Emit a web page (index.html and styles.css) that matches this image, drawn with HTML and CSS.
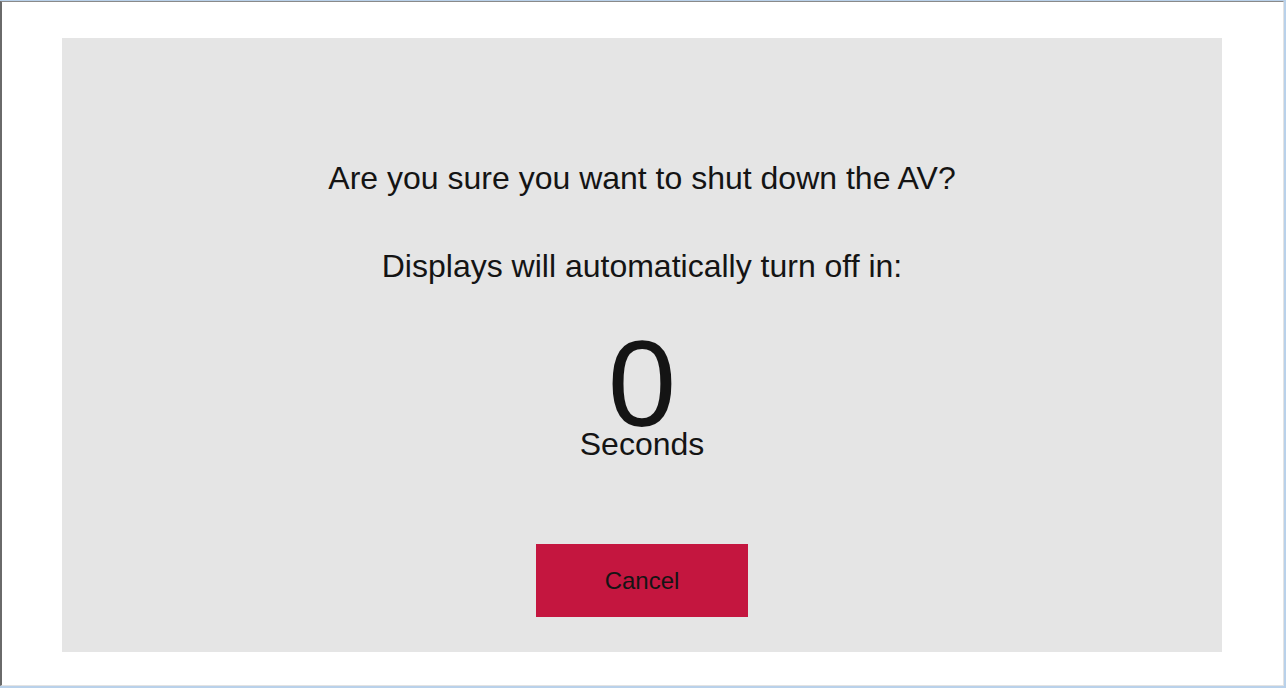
FILE: index.html
```html
<!DOCTYPE html>
<html>
<head>
<meta charset="utf-8">
<link rel="stylesheet" href="styles.css">
</head>
<body>
<div class="outer">
  <div class="window">
    <div class="panel">
      <p class="msg msg-first">Are you sure you want to shut down the AV?</p>
      <p class="msg msg-second">Displays will automatically turn off in:</p>
      <div class="count">0</div>
      <div class="unit">Seconds</div>
      <button class="cancel">Cancel</button>
    </div>
  </div>
</div>
</body>
</html>
```

FILE: styles.css
```css
html, body {
  margin: 0;
  padding: 0;
  background: #ffffff;
}
.outer {
  width: 1286px;
  height: 688px;
  box-sizing: border-box;
  border-top: 1px solid #b9d1ea;
  border-right: 2px solid #b9d1ea;
  border-bottom: 2px solid #b9d1ea;
  background: #ffffff;
}
.window {
  height: 100%;
  box-sizing: border-box;
  border-top: 1px solid #8a8a8a;
  border-left: 2px solid #6a6a6a;
  border-right: 1px solid #e3e3e3;
  border-bottom: 1px solid #e3e3e3;
  padding: 36px 61px 33px 60px;
  background: #ffffff;
}
.panel {
  height: 614px;
  background-color: #e5e5e5;
  display: flex;
  flex-direction: column;
  align-items: center;
  font-family: "Liberation Sans", Arial, sans-serif;
  color: #141414;
}
.msg {
  margin: 0;
  font-size: 32px;
  line-height: 36px;
}
.msg-first {
  margin-top: 122px;
}
.msg-second {
  margin-top: 52px;
}
.count {
  margin-top: 60px;
  font-size: 123px;
  line-height: 80px;
}
.unit {
  margin-top: 2px;
  font-size: 32px;
  line-height: 36px;
}
.cancel {
  margin-top: 82px;
  width: 212px;
  height: 73px;
  border: none;
  padding: 0;
  background: #c4163f;
  color: #141414;
  font-family: "Liberation Sans", Arial, sans-serif;
  font-size: 24px;
  line-height: 28px;
  display: flex;
  align-items: center;
  justify-content: center;
}
```
